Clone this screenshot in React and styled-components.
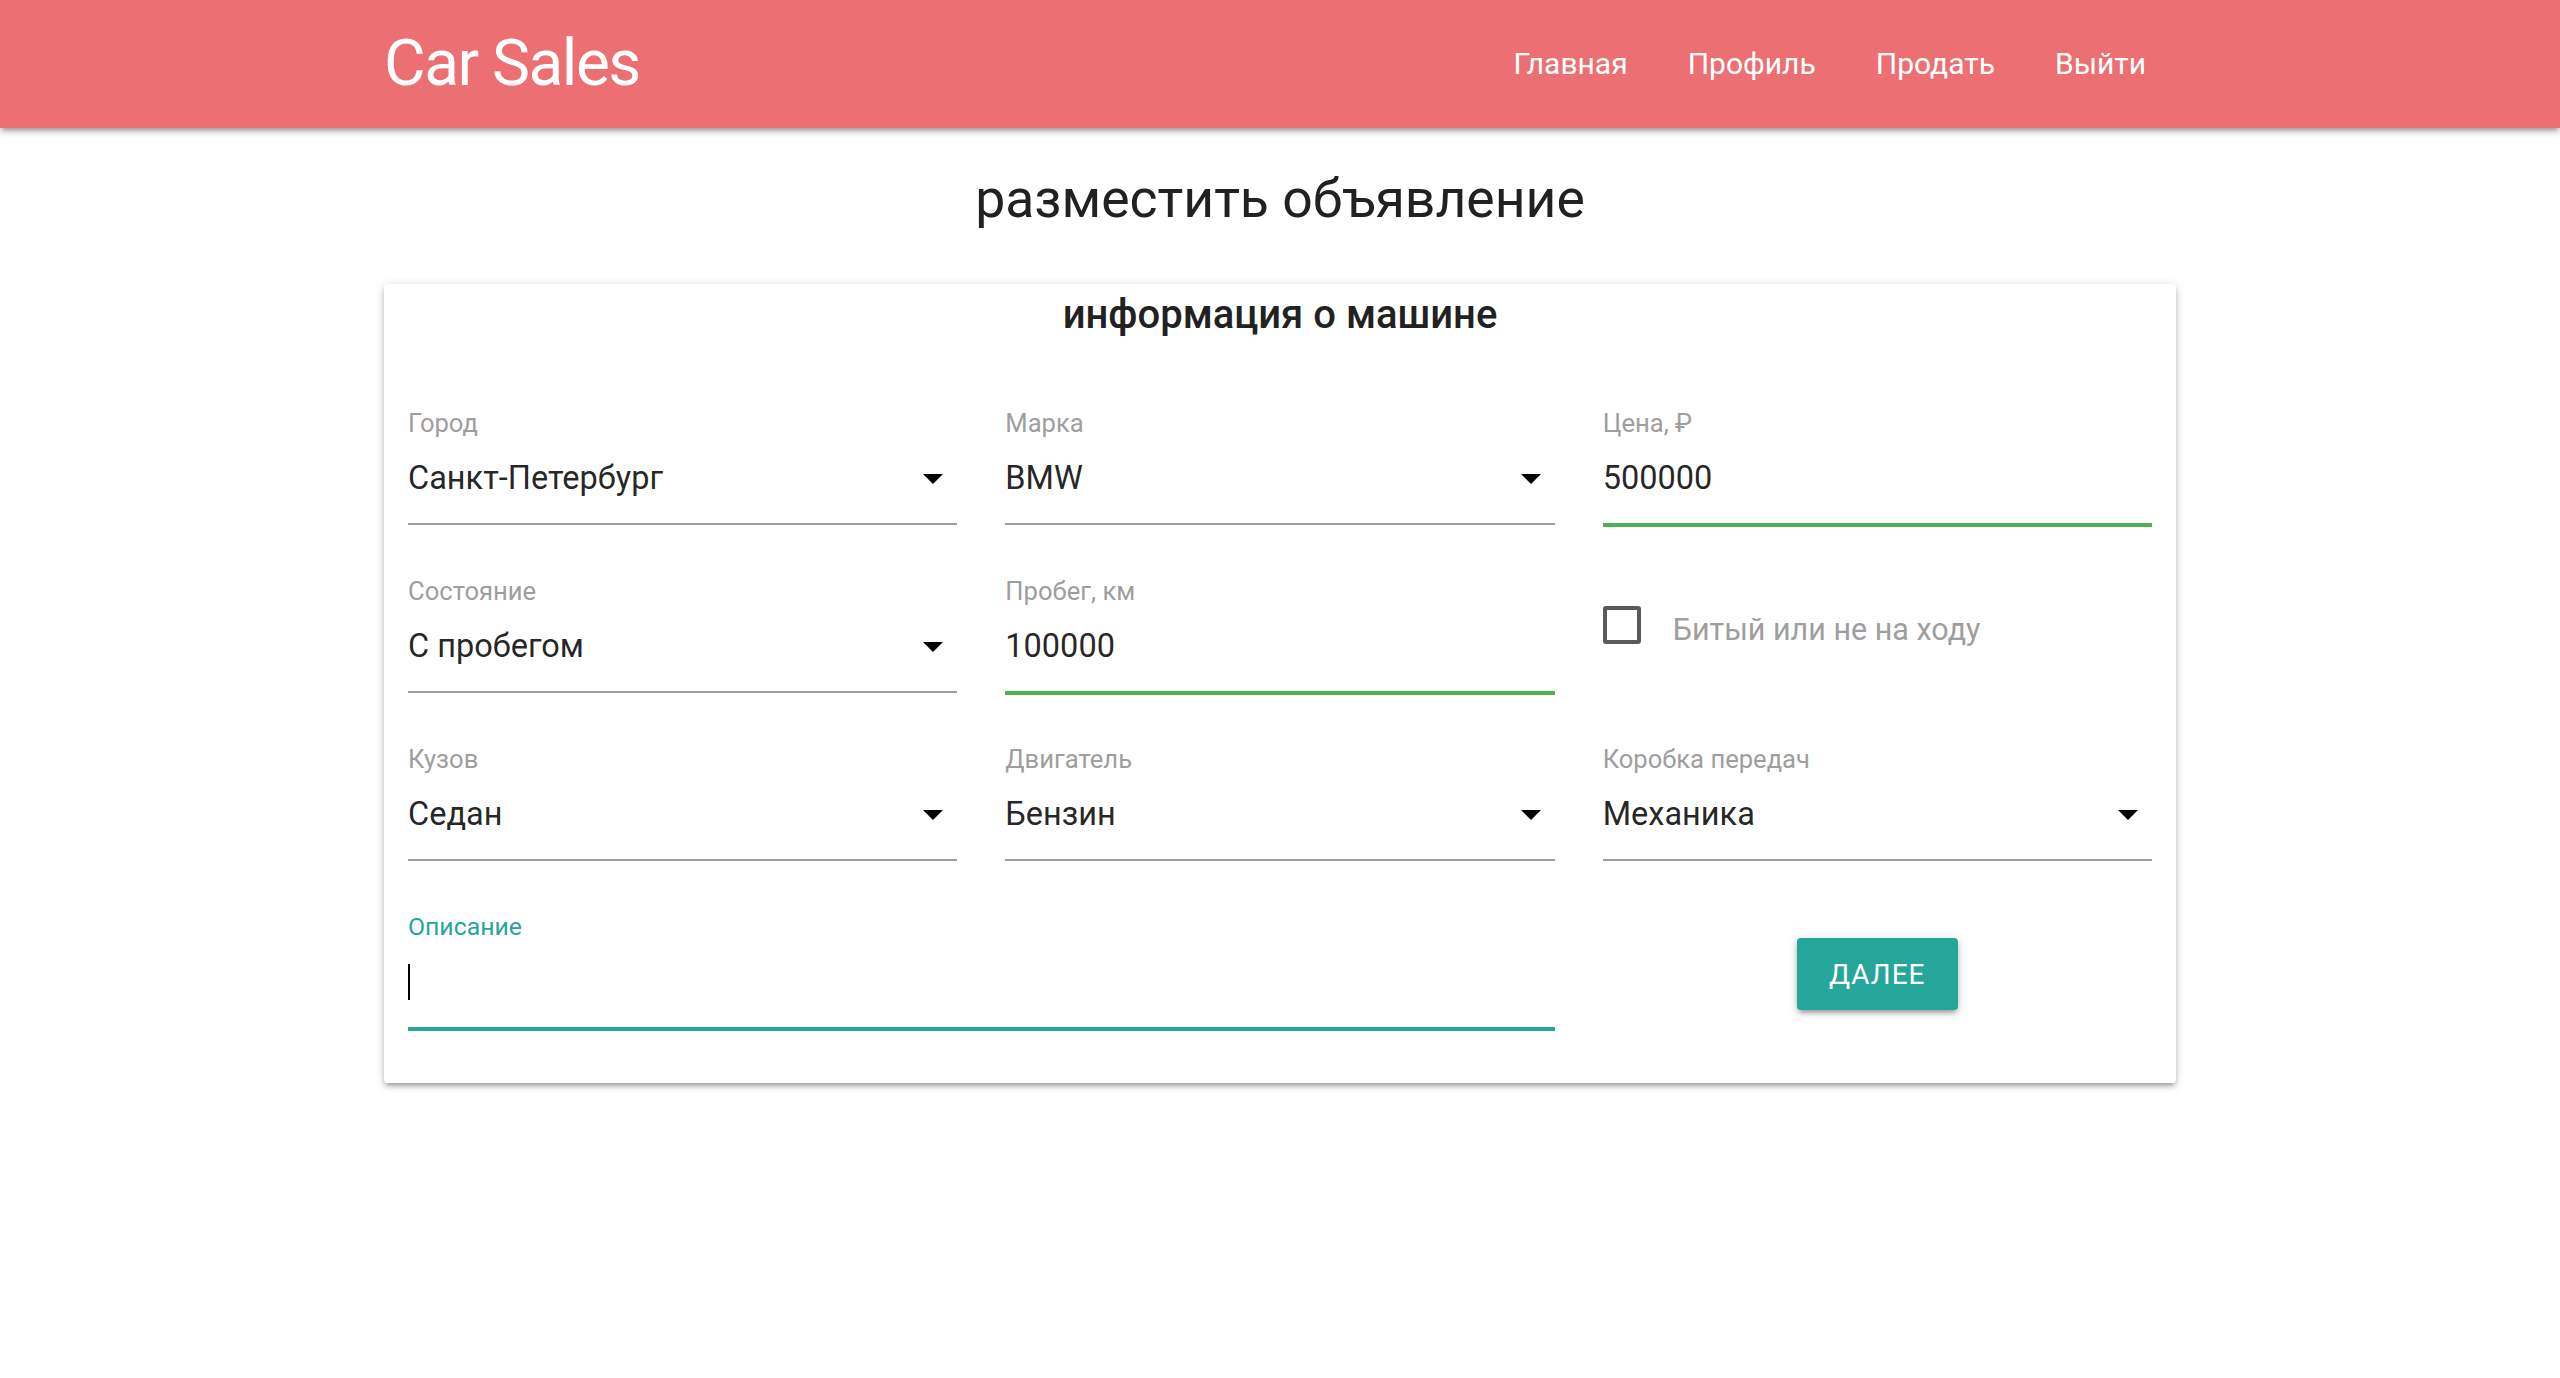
import React from 'react';
import styled, { createGlobalStyle } from 'styled-components';

const COLORS = {
    header: '#ec6f74',
    teal: '#26a69a',
    green: '#4caf50',
    grey: '#9e9e9e',
    text: 'rgba(0, 0, 0, 0.87)',
};

const SHADOW =
    '0 4px 4px 0 rgba(0, 0, 0, 0.14), 0 6px 2px -4px rgba(0, 0, 0, 0.12), 0 2px 10px 0 rgba(0, 0, 0, 0.2)';

const GlobalStyle = createGlobalStyle`
    body {
        margin: 0;
        background: #ffffff;
        font-family: Roboto, "Liberation Sans", sans-serif;
        color: ${COLORS.text};
    }
`;

const Nav = styled.nav`
    height: 128px;
    background-color: ${COLORS.header};
    box-shadow: ${SHADOW};
`;

const Container = styled.div`
    width: 1792px;
    margin: 0 auto;
`;

const NavInner = styled(Container)`
    height: 100%;
    display: flex;
    align-items: center;
    justify-content: space-between;
`;

const Brand = styled.a`
    font-size: 64px;
    letter-spacing: -1.5px;
    color: #ffffff;
    text-decoration: none;
    line-height: 128px;
`;

const NavLinks = styled.ul`
    display: flex;
    margin: 0;
    padding: 0;
    list-style: none;
`;

const NavLink = styled.a`
    display: block;
    padding: 0 30px;
    font-size: 30px;
    line-height: 130px;
    color: #ffffff;
    text-decoration: none;
`;

const Main = styled(Container)`
    padding-bottom: 60px;
`;

const PageTitle = styled.h5`
    margin: 42px 0 56px;
    font-size: 53.5px;
    font-weight: 400;
    line-height: 58px;
    text-align: center;
    color: #212121;
`;

const Card = styled.div`
    background: #ffffff;
    border-radius: 4px;
    box-shadow: ${SHADOW};
`;

const CardTitle = styled.h6`
    margin: 0;
    padding-top: 7px;
    font-size: 40px;
    font-weight: 500;
    line-height: 48px;
    text-align: center;
    color: #212121;
`;

const FormGrid = styled.div`
    display: grid;
    grid-template-columns: repeat(3, 1fr);
    row-gap: 50px;
    padding: 68px 0 54px;
`;

const Field = styled.div`
    grid-column: span ${(p) => p.$span || 1};
    padding: 0 24px;
`;

const FieldLabel = styled.label`
    display: block;
    font-size: ${(p) => (p.$active ? '24.8px' : '25.6px')};
    line-height: 32px;
    color: ${(p) => (p.$active ? COLORS.teal : COLORS.grey)};
`;

const lineColor = { default: COLORS.grey, valid: COLORS.green, focus: COLORS.teal };

const ValueBox = styled.div`
    box-sizing: border-box;
    height: 86px;
    padding-bottom: 6px;
    display: flex;
    align-items: center;
    justify-content: space-between;
    font-size: 32.5px;
    color: ${COLORS.text};
    border-bottom: 2px solid ${(p) => lineColor[p.$state || 'default']};
    box-shadow: ${(p) =>
        p.$state && p.$state !== 'default' ? `0 2px 0 0 ${lineColor[p.$state]}` : 'none'};
`;

const Caret = styled.span`
    display: block;
    width: 2px;
    height: 36px;
    background: #000000;
`;

const CheckCell = styled.div`
    padding: 28px 24px 0;
`;

const CheckRow = styled.label`
    display: flex;
    align-items: center;
    gap: 32px;
    font-size: 30.5px;
    color: ${COLORS.grey};
`;

const CheckBox = styled.span`
    box-sizing: border-box;
    flex-shrink: 0;
    width: 38px;
    height: 38px;
    border: 4px solid #5a5a5a;
    border-radius: 3px;
`;

const CheckText = styled.span`
    padding-top: 9px;
`;

const ButtonCell = styled.div`
    display: flex;
    justify-content: center;
    align-items: center;
    padding-top: 8px;
`;

const Button = styled.button`
    height: 72px;
    padding: 0 32px;
    border: none;
    border-radius: 4px;
    background-color: ${COLORS.teal};
    color: #ffffff;
    font-family: Roboto, "Liberation Sans", sans-serif;
    font-size: 28px;
    letter-spacing: 1px;
    text-transform: uppercase;
    box-shadow: ${SHADOW};
`;

const DropCaret = () => (
    <svg width="48" height="48" viewBox="0 0 24 24">
        <path d="M7 10l5 5 5-5z" fill="#000000" />
    </svg>
);

const SelectField = ({ label, value }) => (
    <Field>
        <FieldLabel>{label}</FieldLabel>
        <ValueBox>
            <span>{value}</span>
            <DropCaret />
        </ValueBox>
    </Field>
);

const InputField = ({ label, value }) => (
    <Field>
        <FieldLabel>{label}</FieldLabel>
        <ValueBox $state="valid">
            <span>{value}</span>
        </ValueBox>
    </Field>
);

const App = () => (
    <>
        <GlobalStyle />
        <Nav>
            <NavInner>
                <Brand href="#">Car Sales</Brand>
                <NavLinks>
                    <li><NavLink href="#">Главная</NavLink></li>
                    <li><NavLink href="#">Профиль</NavLink></li>
                    <li><NavLink href="#">Продать</NavLink></li>
                    <li><NavLink href="#">Выйти</NavLink></li>
                </NavLinks>
            </NavInner>
        </Nav>
        <Main>
            <PageTitle>разместить объявление</PageTitle>
            <Card>
                <CardTitle>информация о машине</CardTitle>
                <FormGrid>
                    <SelectField label="Город" value="Санкт-Петербург" />
                    <SelectField label="Марка" value="BMW" />
                    <InputField label="Цена, ₽" value="500000" />

                    <SelectField label="Состояние" value="С пробегом" />
                    <InputField label="Пробег, км" value="100000" />
                    <CheckCell>
                        <CheckRow>
                            <CheckBox />
                            <CheckText>Битый или не на ходу</CheckText>
                        </CheckRow>
                    </CheckCell>

                    <SelectField label="Кузов" value="Седан" />
                    <SelectField label="Двигатель" value="Бензин" />
                    <SelectField label="Коробка передач" value="Механика" />

                    <Field $span={2}>
                        <FieldLabel $active>Описание</FieldLabel>
                        <ValueBox $state="focus">
                            <Caret />
                        </ValueBox>
                    </Field>
                    <ButtonCell>
                        <Button>Далее</Button>
                    </ButtonCell>
                </FormGrid>
            </Card>
        </Main>
    </>
);

export default App;
